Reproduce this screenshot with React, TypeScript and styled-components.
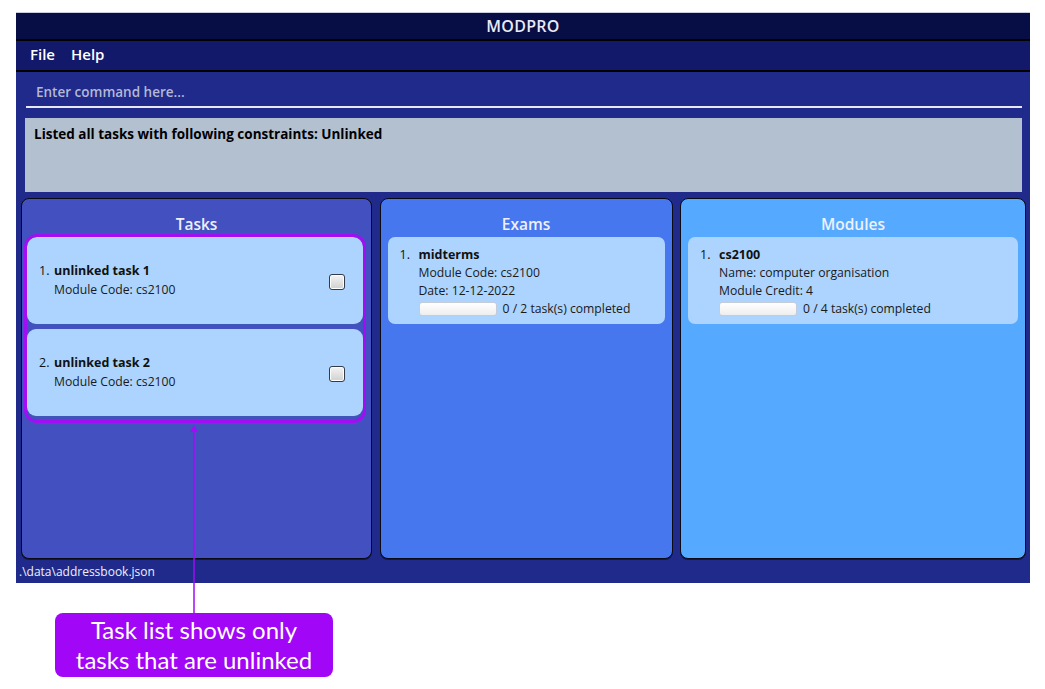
import styled, { createGlobalStyle } from 'styled-components';

const GlobalStyle = createGlobalStyle`
  html, body {
    margin: 0;
    padding: 0;
    background: #ffffff;
  }
  body {
    font-family: 'Open Sans', 'Noto Sans', sans-serif;
  }
`;

interface TaskItem {
  title: string;
  module: string;
}

interface ExamItem {
  title: string;
  module: string;
  date: string;
  done: number;
  total: number;
}

interface ModuleItem {
  code: string;
  name: string;
  credit: number;
  done: number;
  total: number;
}

const tasks: TaskItem[] = [
  { title: 'unlinked task 1', module: 'cs2100' },
  { title: 'unlinked task 2', module: 'cs2100' },
];

const exams: ExamItem[] = [{ title: 'midterms', module: 'cs2100', date: '12-12-2022', done: 0, total: 2 }];

const modules: ModuleItem[] = [{ code: 'cs2100', name: 'computer organisation', credit: 4, done: 0, total: 4 }];

const App = () => {
  return (
    <Page>
      <GlobalStyle />
      <Window>
        <TitleBar>MODPRO</TitleBar>
        <MenuBar>
          <MenuItem>File</MenuItem>
          <MenuItem>Help</MenuItem>
        </MenuBar>
        <Main>
          <CommandBox>
            <CommandText>Enter command here...</CommandText>
          </CommandBox>
          <ResultBox>Listed all tasks with following constraints: Unlinked</ResultBox>
          <Panels>
            <Panel bg="#4350c0">
              <PanelTitle>Tasks</PanelTitle>
              <Highlight>
                {tasks.map((t, i) => (
                  <TaskCard key={t.title}>
                    <TaskBody>
                      <Line>
                        <Index>{i + 1}.</Index>
                        <Bold>{t.title}</Bold>
                      </Line>
                      <TaskDetail>Module Code: {t.module}</TaskDetail>
                    </TaskBody>
                    <CheckBox />
                  </TaskCard>
                ))}
              </Highlight>
            </Panel>
            <Panel bg="#4677ef">
              <PanelTitle>Exams</PanelTitle>
              {exams.map((e, i) => (
                <InfoCard key={e.title}>
                  <Line>
                    <WideIndex>{i + 1}.</WideIndex>
                    <Bold>{e.title}</Bold>
                  </Line>
                  <Detail>Module Code: {e.module}</Detail>
                  <Detail>Date: {e.date}</Detail>
                  <ProgressRow>
                    <ProgressBar>
                      <ProgressFill style={{ width: `${(e.done / e.total) * 100}%` }} />
                    </ProgressBar>
                    {e.done} / {e.total} task(s) completed
                  </ProgressRow>
                </InfoCard>
              ))}
            </Panel>
            <Panel bg="#55aaff">
              <PanelTitle>Modules</PanelTitle>
              {modules.map((m, i) => (
                <InfoCard key={m.code}>
                  <Line>
                    <WideIndex>{i + 1}.</WideIndex>
                    <Bold>{m.code}</Bold>
                  </Line>
                  <Detail>Name: {m.name}</Detail>
                  <Detail>Module Credit: {m.credit}</Detail>
                  <ProgressRow>
                    <ProgressBar>
                      <ProgressFill style={{ width: `${(m.done / m.total) * 100}%` }} />
                    </ProgressBar>
                    {m.done} / {m.total} task(s) completed
                  </ProgressRow>
                </InfoCard>
              ))}
            </Panel>
          </Panels>
          <Footer>.\data\addressbook.json</Footer>
        </Main>
      </Window>
      <Pointer>
        <svg width="10" height="188" viewBox="0 0 10 188">
          <line x1="5" y1="4" x2="5" y2="188" stroke="#a20cf5" strokeWidth="1.5" />
          <polygon points="5,0 1,7 9,7" fill="#a20cf5" />
        </svg>
      </Pointer>
      <Callout>
        Task list shows only
        <br />
        tasks that are unlinked
      </Callout>
    </Page>
  );
};

const Page = styled.div`
  position: relative;
  width: 1045px;
  height: 689px;
  padding: 12px 0 0 16px;
  box-sizing: border-box;
`;

const Window = styled.div`
  width: 1014px;
  display: flex;
  flex-direction: column;
`;

const TitleBar = styled.div`
  height: 26px;
  background: #070d45;
  border-top: 1px solid #c8cde0;
  border-bottom: 2px solid #000000;
  color: #e8eaf4;
  font-size: 16px;
  font-weight: 600;
  display: flex;
  align-items: center;
  justify-content: center;
  letter-spacing: 0.3px;
`;

const MenuBar = styled.div`
  height: 31px;
  background: #12196a;
  border-bottom: 2px solid #000000;
  display: flex;
  align-items: center;
  gap: 16px;
  padding: 0 0 3px 14px;
  box-sizing: border-box;
`;

const MenuItem = styled.span`
  color: #ffffff;
  font-size: 15px;
  font-weight: 600;
`;

const Main = styled.div`
  background: #1f2a8b;
  display: flex;
  flex-direction: column;
  padding: 0 4px 0 3px;
`;

const CommandBox = styled.div`
  height: 36px;
  margin: 0 4px 0 7px;
  border-bottom: 2px solid #e6e8f2;
  display: flex;
  align-items: center;
  padding-left: 10px;
  padding-top: 6px;
  box-sizing: border-box;
`;

const CommandText = styled.span`
  color: #b4b8d4;
  font-size: 13.5px;
  font-weight: 600;
`;

const ResultBox = styled.div`
  margin: 10px 4px 0 6px;
  height: 74px;
  background: #b3c0d0;
  padding: 7px 9px;
  box-sizing: border-box;
  color: #000000;
  font-size: 13.5px;
  font-weight: 700;
`;

const Panels = styled.div`
  display: grid;
  grid-template-columns: 351px 293px 346px;
  column-gap: 7.5px;
  margin-top: 6px;
  margin-left: 2px;
  height: 361px;
`;

const Panel = styled.div<{ bg: string }>`
  background: ${(props) => props.bg};
  border: 1.5px solid #0a0a14;
  border-radius: 8px;
  padding: 0 6px 0 6px;
  display: flex;
  flex-direction: column;
  box-sizing: border-box;
  box-shadow: 0 1px 0 rgba(0, 0, 0, 0.5);
`;

const PanelTitle = styled.div`
  color: #eef0fb;
  font-size: 15.5px;
  font-weight: 600;
  text-align: center;
  padding-top: 14px;
  height: 38px;
  box-sizing: border-box;
`;

const Highlight = styled.div`
  margin: -3px -0.5px 0 -4px;
  border: 3.5px solid #a10ef4;
  border-radius: 13px;
  padding: 0 0 4px 0;
  display: flex;
  flex-direction: column;
  gap: 5px;
  overflow: hidden;
  background: #4350c0;
`;

const TaskCard = styled.div`
  height: 87px;
  background: #acd4fe;
  border-radius: 9px;
  box-shadow: 0 2px 0 #3f55b8;
  display: flex;
  align-items: center;
  justify-content: space-between;
  padding: 0 18px 0 12px;
  box-sizing: border-box;
`;

const TaskBody = styled.div`
  display: flex;
  flex-direction: column;
  gap: 1px;
  margin-top: -2px;
`;

const Line = styled.div`
  display: flex;
  align-items: baseline;
  color: #111111;
  font-size: 12.5px;
  line-height: 19px;
`;

const Index = styled.span`
  width: 15px;
  font-weight: 400;
`;

const WideIndex = styled.span`
  width: 19px;
  font-weight: 400;
`;

const Bold = styled.span`
  font-weight: 700;
`;

const Detail = styled.div`
  color: #1a1a1a;
  font-size: 12.2px;
  line-height: 18px;
  padding-left: 19px;
`;

const TaskDetail = styled(Detail)`
  padding-left: 15px;
`;

const CheckBox = styled.div`
  width: 14px;
  height: 14px;
  border: 1.5px solid #333a4a;
  border-radius: 3px;
  background: linear-gradient(#f4f4f4, #d0d0d0);
  box-shadow: inset 0 0 0 1px #ffffff;
  margin-top: 2px;
`;

const InfoCard = styled.div`
  background: #acd4fe;
  border-radius: 7px;
  padding: 8px 12px 5px 12px;
  box-sizing: border-box;
  height: 87px;
  margin: 0 1px;
  display: flex;
  flex-direction: column;
`;

const ProgressRow = styled.div`
  display: flex;
  align-items: center;
  gap: 6px;
  color: #1a1a1a;
  font-size: 12.2px;
  line-height: 18px;
  padding-left: 19px;
`;

const ProgressBar = styled.div`
  width: 76px;
  height: 12px;
  border: 1px solid #c4ccd8;
  border-radius: 3px;
  background: linear-gradient(#ffffff, #eeeeee);
  overflow: hidden;
`;

const ProgressFill = styled.div`
  height: 100%;
  background: #3b7be0;
`;

const Footer = styled.div`
  color: #eef0fb;
  font-size: 12px;
  height: 24px;
  display: flex;
  align-items: center;
`;

const Pointer = styled.div`
  position: absolute;
  left: 189px;
  top: 425px;
  line-height: 0;
`;

const Callout = styled.div`
  width: 278px;
  height: 64px;
  margin: 30px 0 0 39px;
  background: #a106f6;
  border-radius: 8px;
  color: #ffffff;
  font-family: Lato, 'Open Sans', sans-serif;
  font-size: 24px;
  line-height: 30px;
  text-align: center;
  display: flex;
  align-items: center;
  justify-content: center;
`;

export default App;
